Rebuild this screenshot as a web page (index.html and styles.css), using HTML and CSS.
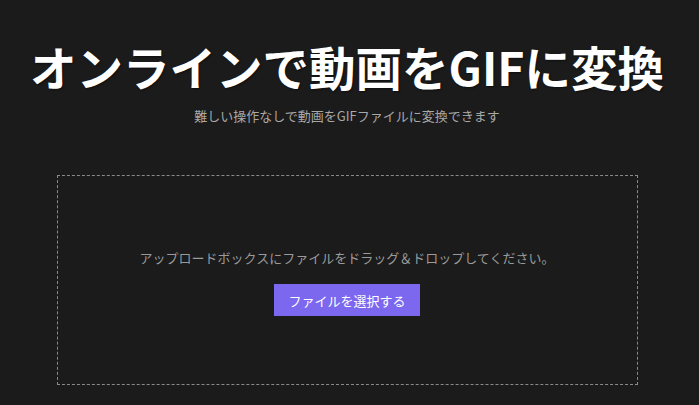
FILE: index.html
```html
<!DOCTYPE html>
<html lang="ja">

<head>
    <meta charset="utf-8">
    <title>オンラインで動画をGIFに変換</title>
    <link rel="stylesheet" href="styles.css">
</head>

<body>
    <div class="container">
        <header class="hero">
            <h1 class="title">オンラインで動画をGIFに変換</h1>
            <p class="subtitle">難しい操作なしで動画をGIFファイルに変換できます</p>
        </header>
        <div id="upload-box" class="upload-box">
            <p class="upload-hint">アップロードボックスにファイルをドラッグ＆ドロップしてください。</p>
            <button class="select-btn">ファイルを選択する</button>
        </div>
    </div>
</body>

</html>
```

FILE: styles.css
```css
* {
    margin: 0;
    padding: 0;
    box-sizing: border-box;
}

body {
    font-family: "Noto Sans CJK JP", "Noto Sans", sans-serif;
    background: #1b1b1b;
    color: #fff;
    height: 100vh;
    overflow: hidden;
}

.container {
    display: flex;
    flex-direction: column;
    align-items: center;
    padding-right: 5px;
}

.hero {
    text-align: center;
    padding-top: 32px;
}

.title {
    font-size: 46.5px;
    font-weight: 700;
    line-height: 68px;
    color: #fff;
    text-shadow: 1px 1px 2px rgba(0, 0, 0, 0.5);
}

.subtitle {
    font-size: 13px;
    line-height: 20px;
    margin-top: 6px;
    color: #a8a8a8;
}

.upload-box {
    width: 581px;
    height: 210px;
    margin-top: 49px;
    border: 1px dashed #8a8a8a;
    display: flex;
    flex-direction: column;
    align-items: center;
    justify-content: center;
    gap: 16px;
    padding-top: 4px;
}

.upload-hint {
    font-size: 13px;
    line-height: 20px;
    color: #9a9a9a;
}

.select-btn {
    font-family: inherit;
    font-size: 13px;
    height: 32px;
    padding: 0 14px;
    background: #7b68ee;
    color: #fff;
    border: none;
    cursor: pointer;
}

.select-btn:hover {
    background: #6a58dd;
}
```
